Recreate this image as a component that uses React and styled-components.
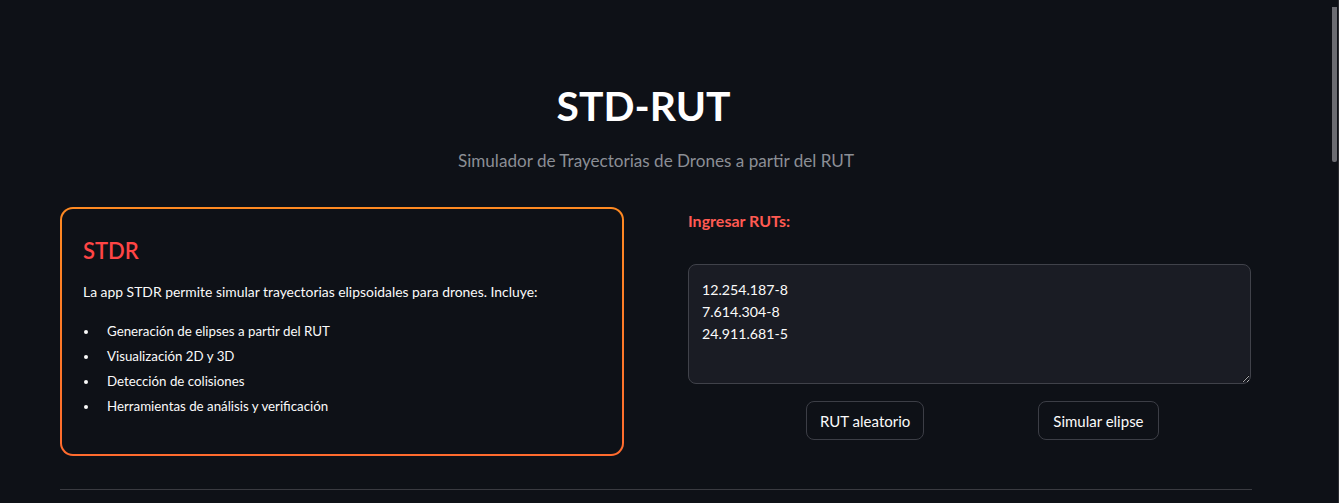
import React from "react";
import styled, { createGlobalStyle } from "styled-components";

const Global = createGlobalStyle`
  html, body { margin: 0; padding: 0; background: #0e1117; }
  body { font-family: Lato, "Noto Sans", sans-serif; color: #fafafa; }
`;

const Page = styled.main`
  padding: 0 87px 40px 60px;
  box-sizing: border-box;
`;

const ScrollTrack = styled.div`
  position: fixed;
  top: 0;
  right: 0;
  width: 8px;
  height: 100vh;
  border-right: 1px solid #2b2c31;
  box-sizing: border-box;
`;

const ScrollThumb = styled.div`
  margin: 7px 1px 0 1px;
  width: 5px;
  height: 155px;
  background: #6c6d73;
  border-radius: 0 0 2px 2px;
`;

const Header = styled.header`
  display: flex;
  flex-direction: column;
  align-items: center;
  padding-top: 78px;
`;

const Title = styled.h1`
  margin: 0;
  padding-right: 25px;
  font-size: 40.8px;
  font-weight: 700;
  line-height: 56px;
  color: #ffffff;
`;

const Subtitle = styled.p`
  margin: 14px 0 0;
  font-size: 17.1px;
  line-height: 26px;
  color: #8b8e95;
`;

const Columns = styled.section`
  display: grid;
  grid-template-columns: 564px 563px;
  column-gap: 64px;
  margin-top: 33px;
`;

const CardFrame = styled.div`
  padding: 2px;
  border-radius: 13px;
  background: linear-gradient(180deg, #ff8a22 0%, #ff6b2e 100%);
  height: 249px;
  box-sizing: border-box;
`;

const Card = styled.div`
  height: 100%;
  box-sizing: border-box;
  background: #0e1117;
  border-radius: 11px;
  padding: 26px 21px 20px;
`;

const CardTitle = styled.h2`
  margin: 0;
  font-size: 22px;
  font-weight: 600;
  line-height: 32px;
  color: #ff4545;
`;

const Paragraph = styled.p`
  margin: 14px 0 0;
  font-size: 13.9px;
  line-height: 22px;
`;

const List = styled.ul`
  margin: 16px 0 0;
  padding: 0 0 0 16px;
  font-size: 13.3px;
  line-height: 25px;
`;

const Item = styled.li`
  padding-left: 8px;
  height: 25px;
`;

const Right = styled.div`
  display: flex;
  flex-direction: column;
`;

const Label = styled.label`
  padding-top: 2px;
  font-size: 16px;
  font-weight: 700;
  line-height: 24px;
  color: #ff5a52;
`;

const TextArea = styled.textarea`
  margin-top: 31px;
  height: 120px;
  box-sizing: border-box;
  padding: 14px 13px 12px;
  background: #1a1c24;
  border: 1px solid #40424a;
  border-radius: 8px;
  color: #fafafa;
  font-family: Lato, "Noto Sans", sans-serif;
  font-size: 14.2px;
  line-height: 22px;
  resize: vertical;
  outline: none;
`;

const ButtonRow = styled.div`
  display: flex;
  gap: 114px;
  padding-left: 118px;
  margin-top: 17px;
`;

const Button = styled.button`
  height: 39px;
  padding: 0 ${(p) => (p.$wide ? 14 : 13)}px;
  background: #0e1117;
  border: 1px solid #3c3e46;
  border-radius: 8px;
  color: #fafafa;
  font-family: Lato, "Noto Sans", sans-serif;
  font-size: 15px;
`;

const Divider = styled.hr`
  margin: 33px 0 0;
  border: none;
  border-top: 1px solid #3a3b41;
`;

export default function App() {
  return (
    <>
      <Global />
      <Page>
        <Header>
          <Title>STD-RUT</Title>
          <Subtitle>Simulador de Trayectorias de Drones a partir del RUT</Subtitle>
        </Header>
        <Columns>
          <CardFrame>
            <Card>
              <CardTitle>STDR</CardTitle>
              <Paragraph>
                La app STDR permite simular trayectorias elipsoidales para drones. Incluye:
              </Paragraph>
              <List>
                <Item>Generación de elipses a partir del RUT</Item>
                <Item>Visualización 2D y 3D</Item>
                <Item>Detección de colisiones</Item>
                <Item>Herramientas de análisis y verificación</Item>
              </List>
            </Card>
          </CardFrame>
          <Right>
            <Label htmlFor="ruts">Ingresar RUTs:</Label>
            <TextArea
              id="ruts"
              defaultValue={"12.254.187-8\n7.614.304-8\n24.911.681-5"}
            />
            <ButtonRow>
              <Button>RUT aleatorio</Button>
              <Button $wide>Simular elipse</Button>
            </ButtonRow>
          </Right>
        </Columns>
        <Divider />
      </Page>
      <ScrollTrack>
        <ScrollThumb />
      </ScrollTrack>
    </>
  );
}
